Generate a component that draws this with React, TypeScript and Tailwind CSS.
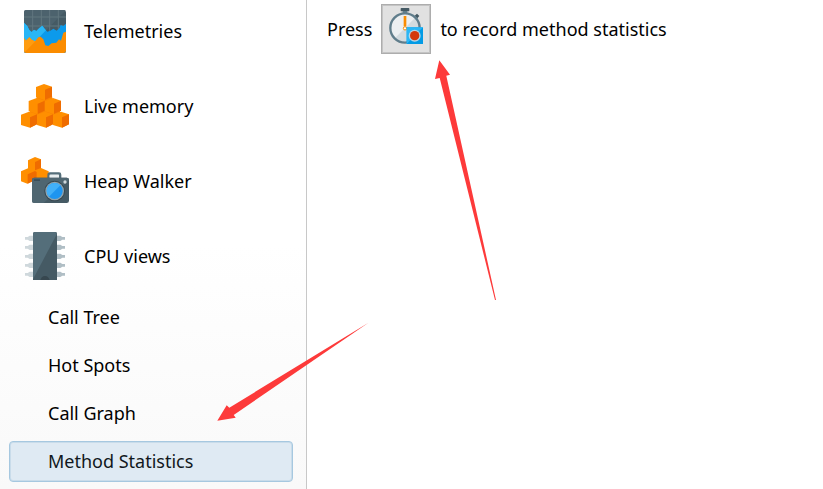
import React from "react";

const TelemetriesIcon: React.FC = () => (
  <svg className="size-12 shrink-0" viewBox="33 21 144 144" aria-hidden="true">
    <defs>
      <clipPath id="telemetries-frame">
        <rect x="42" y="30" width="126" height="129" rx="7" />
      </clipPath>
    </defs>
    <g clipPath="url(#telemetries-frame)">
      <rect x="42" y="30" width="126" height="129" fill="#455a64" />
      <path d="M42 30H168L42 159Z" fill="#4c626d" />
      <path d="M68 30V110M94 30V110M119 30V110M145 30V110M42 51H168M42 78H168" stroke="#61767f" strokeWidth="3" />
      <path
        d="M42 68L52 78L58 90L65 96L72 89L79 93L88 84L97 77L105 88L112 95L121 92L130 86L140 92L148 85L152 75L160 78L168 71V159H42Z"
        fill="#0c9aeb"
      />
      <path d="M42 68L52 78L58 90L65 96L72 89L79 93L88 84L97 77L105 88L108 91L42 159Z" fill="#29b6f6" />
      <path
        d="M42 115L48 122L58 112L66 120L75 124L85 112L92 110L100 118L106 136L115 138L125 130L139 128L147 118L153 122L160 98L168 95V159H42Z"
        fill="#fb8c00"
      />
      <path d="M42 115L48 122L58 112L66 120L75 124L79 121L42 159Z" fill="#ff9c10" />
    </g>
  </svg>
);

interface CubeProps {
  x: number;
  y: number;
}

const Cube: React.FC<CubeProps> = ({ x, y }) => (
  <g transform={`translate(${x} ${y})`}>
    <path d="M0 9L24 0L48 8V38L27 48L0 40Z" fill="#ff8f00" />
    <path d="M27 17L48 8V38L27 48Z" fill="#ef6c00" />
  </g>
);

const LiveMemoryIcon: React.FC = () => (
  <svg className="size-12 shrink-0" viewBox="33 36 144 144" aria-hidden="true">
    <path d="M80 78H126L129 95L150 110V138H60V95L80 86Z" fill="#fb8500" />
    <Cube x={78} y={42} />
    <Cube x={56} y={84} />
    <Cube x={105} y={84} />
    <Cube x={33} y={125} />
    <Cube x={81} y={125} />
    <Cube x={129} y={125} />
  </svg>
);

const HeapWalkerIcon: React.FC = () => (
  <svg className="size-12 shrink-0" viewBox="33 27 144 144" aria-hidden="true">
    <path d="M54 37L75 27L93 34V60L116 70V98L80 93L52 107L33 100V70L54 61Z" fill="#ff8f00" />
    <path d="M75 42L93 34V60L75 67ZM53 79L75 69L80 72V94L53 107Z" fill="#ef6c00" />
    <path d="M112 92V80Q112 73 119 73H147Q154 73 154 80V92H147V83Q147 80 144 80H122Q119 80 119 83V92Z" fill="#546e7a" />
    <rect x="119" y="80" width="28" height="9" fill="#e8eef0" />
    <rect x="66" y="89" width="111" height="76" rx="7" fill="#455a64" />
    <path d="M73 89H170Q177 89 177 96L101 165H73Q66 165 66 158V96Q66 89 73 89Z" fill="#4f6671" />
    <rect x="72" y="94" width="18" height="5" fill="#3b4e58" />
    <circle cx="165" cy="102" r="5" fill="#cfd8dc" />
    <circle cx="134" cy="129" r="31" fill="#37474f" />
    <circle cx="134" cy="129" r="28" fill="#90a4ae" />
    <circle cx="134" cy="129" r="24" fill="#1e95f0" />
    <path d="M117 146A24 24 0 0 1 151 112Z" fill="#42b0f8" />
  </svg>
);

const CpuIcon: React.FC = () => (
  <svg className="size-12 shrink-0" viewBox="33 30 144 144" aria-hidden="true">
    {[49, 76, 103, 130, 157].map((y) => (
      <g key={y} transform={`translate(0 ${y})`}>
        <path d="M45 -4H53L59 -8H70V8H59L53 4H45Z" fill="#cfd8dc" />
        <path d="M165 -4H157L151 -8H140V8H151L157 4H165Z" fill="#b0bec5" />
      </g>
    ))}
    <rect x="69" y="30" width="72" height="147" rx="5" fill="#455a64" />
    <path d="M74 30H136Q141 30 141 35L69 172V35Q69 30 74 30Z" fill="#546e7a" />
    <path d="M91 177A14 15 0 0 1 119 177Z" fill="#37474f" />
  </svg>
);

const StopwatchIcon: React.FC = () => (
  <svg className="size-full" viewBox="39 21 138 138" aria-hidden="true">
    <rect x="92" y="27" width="26" height="10" rx="2" fill="#455a64" />
    <rect x="98" y="36" width="14" height="9" fill="#607d8b" />
    <path d="M134 50L141 44L148 51L142 58Z" fill="#455a64" />
    <path d="M130 58L136 51L143 59L137 65Z" fill="#607d8b" />
    <circle cx="105" cy="87" r="45" fill="#eceff1" />
    <path d="M137 55A45 45 0 0 1 73 119Z" fill="#d3dbdf" />
    <circle cx="105" cy="87" r="44" fill="none" stroke="#607d8b" strokeWidth="7" />
    <path d="M105 51V82" stroke="#fb8c00" strokeWidth="8" />
    <circle cx="105" cy="88" r="5" fill="#fff" stroke="#fb8c00" strokeWidth="3" />
    <rect x="110" y="85" width="49" height="50" fill="#039be5" />
    <path d="M110 85H159L110 135Z" fill="#29b6f6" />
    <circle cx="134" cy="110" r="18" fill="#b5d4e6" />
    <circle cx="134" cy="110" r="14" fill="#d4380d" />
  </svg>
);

const sections = [
  { label: "Telemetries", Icon: TelemetriesIcon },
  { label: "Live memory", Icon: LiveMemoryIcon },
  { label: "Heap Walker", Icon: HeapWalkerIcon },
  { label: "CPU views", Icon: CpuIcon },
];

const cpuViews = ["Call Tree", "Hot Spots", "Call Graph", "Method Statistics"];

const Sidebar: React.FC = () => (
  <nav className="w-[307px] shrink-0 border-r border-[#c8c8c8] bg-linear-to-b from-white from-50% to-[#f9f9f9] pt-[7px]">
    <ul className="flex flex-col gap-[27px] pl-[21px]">
      {sections.map(({ label, Icon }) => (
        <li key={label}>
          <button type="button" className="flex items-center gap-[15px]">
            <Icon />
            <span>{label}</span>
          </button>
        </li>
      ))}
    </ul>
    <ul className="mt-[17px] flex flex-col gap-[7px] pr-[13px] pl-[9px] pb-1.5">
      {cpuViews.map((label) => (
        <li key={label}>
          <button
            type="button"
            className={
              label === "Method Statistics"
                ? "h-[41px] w-full rounded-sm border border-[#a6c8e0] bg-[#dfeaf3] px-[38px] pb-px text-left text-[#111820] inset-ring inset-ring-[#c9dcea]"
                : "h-[41px] w-full rounded-sm border border-transparent px-[38px] pb-px text-left"
            }
          >
            {label}
          </button>
        </li>
      ))}
    </ul>
  </nav>
);

const Arrows: React.FC = () => (
  <svg
    className="pointer-events-none absolute top-0 left-0"
    width="823"
    height="489"
    viewBox="0 0 823 489"
    fill="#fd3a3a"
    aria-hidden="true"
  >
    <path d="M439.3 60.3L450 74.7L446.3 75.7L496 300H495L439.7 78L435 79Z" />
    <path d="M217.3 420.7L226.7 405.3L229.3 407.7L368.5 322.7L233.7 415L235.7 417.7Z" />
  </svg>
);

export default function App() {
  return (
    <div className="relative flex min-h-screen bg-white font-['Noto_Sans',sans-serif] text-[18px] leading-6 text-black">
      <Sidebar />
      <main className="flex-1 pt-1 pl-5">
        <div className="flex items-center gap-[9px]">
          <span>Press</span>
          <button
            type="button"
            aria-label="Record method statistics"
            className="size-[50px] shrink-0 border border-[#adadad] bg-[#e1e1e1] p-px inset-ring inset-ring-[#c4c4c4]"
          >
            <StopwatchIcon />
          </button>
          <span>to record method statistics</span>
        </div>
      </main>
      <Arrows />
    </div>
  );
}
